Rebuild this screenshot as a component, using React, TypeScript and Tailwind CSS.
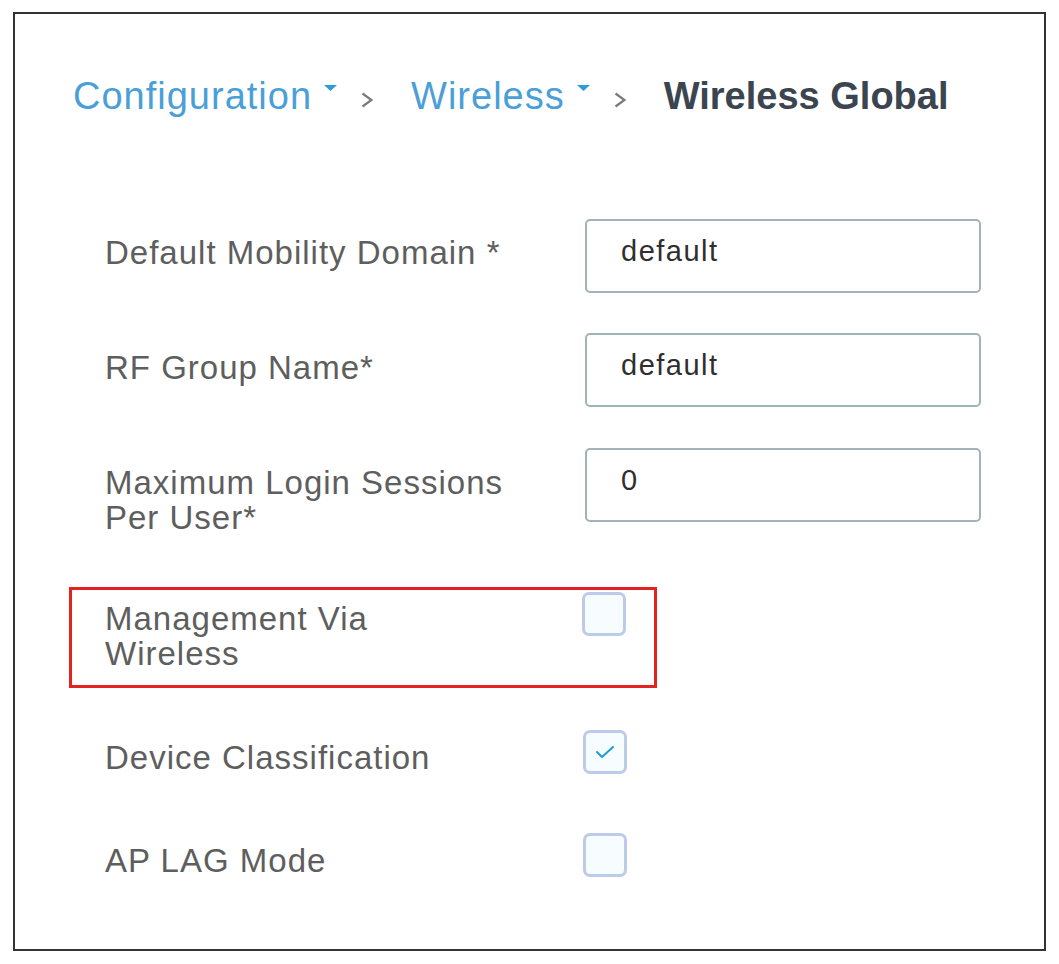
import React from "react";

const Caret = () => (
  <svg width="13" height="6" viewBox="0 0 13 6" className="mt-[8px] ml-[12px] shrink-0">
    <path d="M0 0 H13 L6.5 6 Z" fill="#2f9ad8" />
  </svg>
);

const Chevron = () => (
  <svg width="12" height="16" viewBox="0 0 12 16" className="mt-[15px] ml-[24px] shrink-0">
    <path d="M1.5 1.5 L10.5 8 L1.5 14.5" fill="none" stroke="#7a7a7a" strokeWidth="2.2" />
  </svg>
);

const Checkbox = ({ checked = false, className = "" }: { checked?: boolean; className?: string }) => (
  <div
    className={`w-[44px] h-[44px] shrink-0 rounded-[7px] border-[3px] border-[#bccbea] bg-[#f7fcff] flex items-center justify-center ${className}`}
  >
    {checked && (
      <svg width="26" height="20" viewBox="0 0 26 20">
        <path d="M5 10 L10 15 L21 5" fill="none" stroke="#1d9bd6" strokeWidth="2" strokeLinecap="round" strokeLinejoin="round" />
      </svg>
    )}
  </div>
);

const Field = ({ value }: { value: string }) => (
  <div className="w-[396px] h-[74px] shrink-0 border-2 border-[#a2b3b6] rounded-[5px] bg-white pl-[34px] pt-[16px] text-[29px] leading-[29px] tracking-[1.5px] text-[#2f2f2f]">
    {value}
  </div>
);

export default function App() {
  const font = { fontFamily: '"Liberation Sans", Arial, sans-serif' };
  return (
    <div className="w-[1059px] h-[964px] bg-white pt-[12px] pl-[13px]" style={font}>
      <div className="w-[1033px] h-[939px] border-2 border-[#333333] bg-white">
        {/* Breadcrumb */}
        <div className="flex items-start ml-[58px] mt-[63px] h-[38px]">
          <span className="text-[38px] leading-[38px] tracking-[1px] text-[#4a9fd8]">Configuration</span>
          <Caret />
          <Chevron />
          <span className="ml-[38px] text-[38px] leading-[38px] tracking-[1px] text-[#4a9fd8]">Wireless</span>
          <Caret />
          <Chevron />
          <span className="ml-[38px] text-[38px] leading-[38px] font-bold text-[#3a4550]">Wireless Global</span>
        </div>

        {/* Form */}
        <div className="flex flex-col ml-[90px] mt-[104px] text-[33px] leading-[35px] tracking-[1px] text-[#5e5e5e]">
          <div className="flex items-start h-[74px]">
            <div className="w-[480px] mt-[16px]">Default Mobility Domain *</div>
            <Field value="default" />
          </div>
          <div className="flex items-start mt-[40px] h-[74px]">
            <div className="w-[480px] mt-[17px]">RF Group Name*</div>
            <Field value="default" />
          </div>
          <div className="flex items-start mt-[41px] h-[74px]">
            <div className="w-[480px] mt-[17px]">
              Maximum Login Sessions
              <br />
              Per User*
            </div>
            <Field value="0" />
          </div>

          {/* Highlighted row */}
          <div className="mt-[65px] -ml-[36px] w-[588px] h-[101px] border-[3px] border-[#e3231f] pl-[33px] flex items-start">
            <div className="w-[477px] mt-[11px]">
              Management Via
              <br />
              Wireless
            </div>
            <Checkbox className="mt-[2px]" />
          </div>

          <div className="flex items-start mt-[42px] h-[44px]">
            <div className="w-[478px] mt-[10px]">Device Classification</div>
            <Checkbox checked />
          </div>
          <div className="flex items-start mt-[59px] h-[44px]">
            <div className="w-[478px] mt-[10px]">AP LAG Mode</div>
            <Checkbox />
          </div>
        </div>
      </div>
    </div>
  );
}
